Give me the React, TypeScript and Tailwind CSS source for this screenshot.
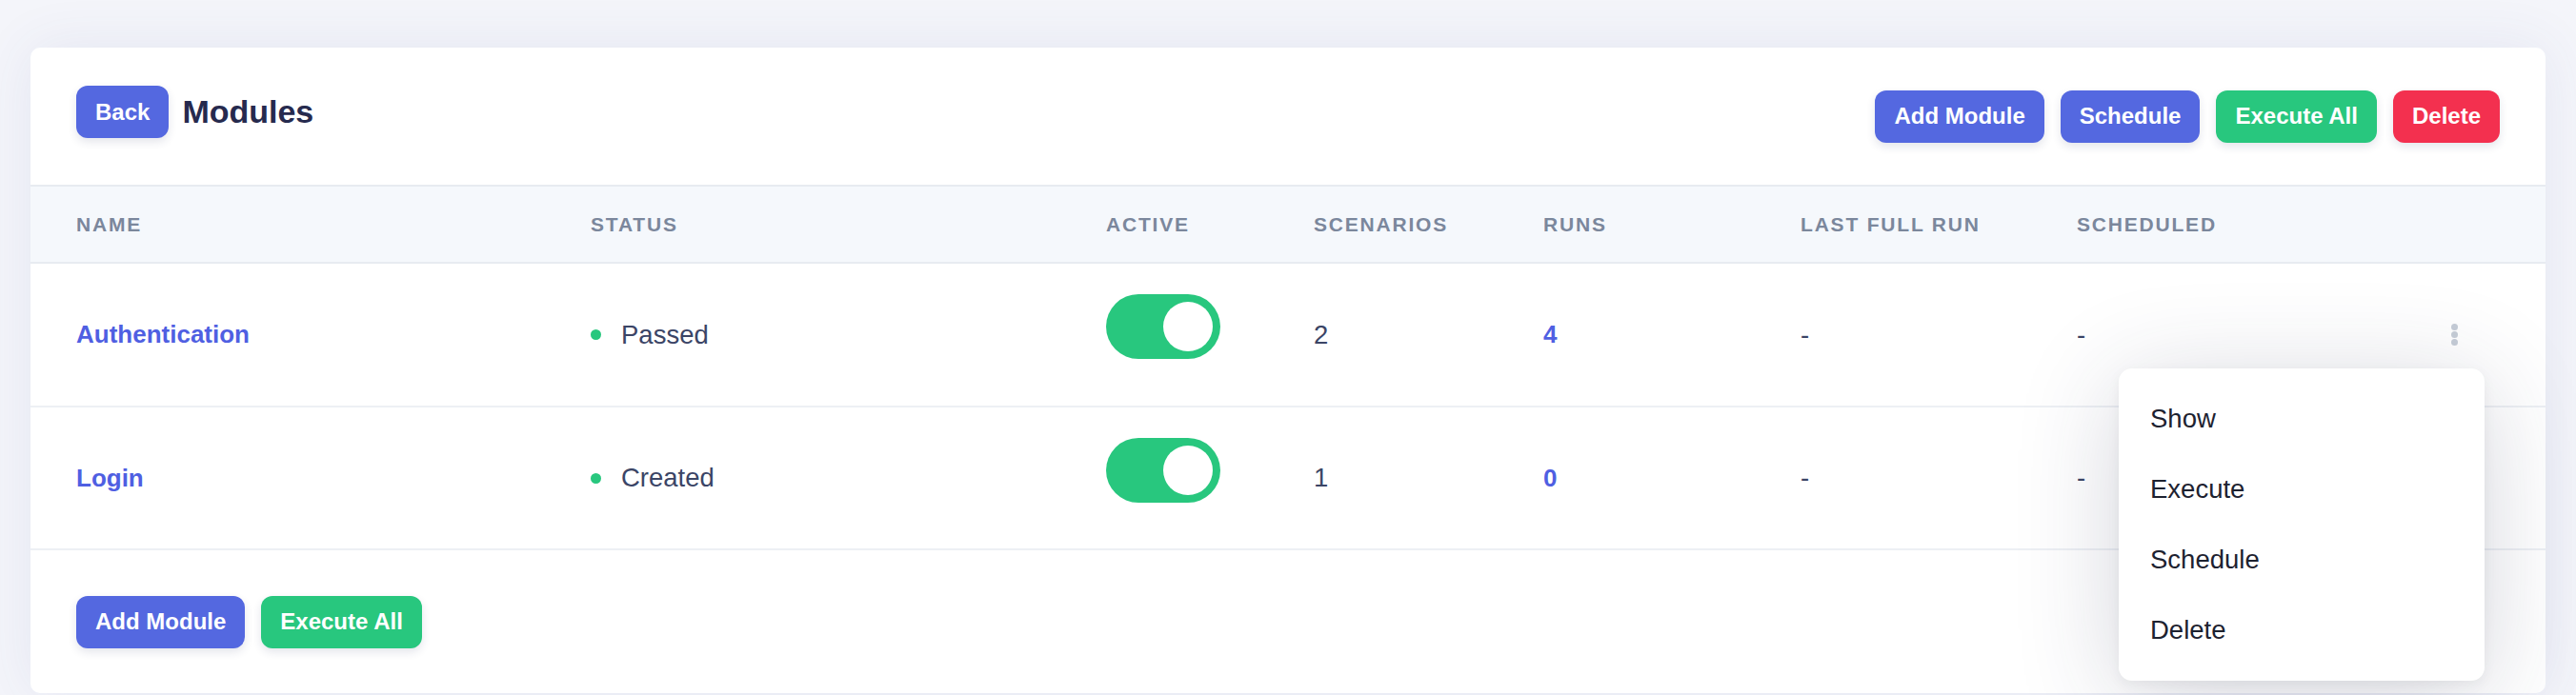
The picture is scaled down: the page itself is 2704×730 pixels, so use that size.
import React from 'react'

type Row = {
  name: string
  status: string
  scenarios: number
  runs: number
}

const rows: Row[] = [
  { name: 'Authentication', status: 'Passed', scenarios: 2, runs: 4 },
  { name: 'Login', status: 'Created', scenarios: 1, runs: 0 },
]

const cols = 'grid grid-cols-[540px_541px_218px_241px_270px_290px_1fr_51px] px-12 items-center'

function Btn({ color, children }: { color: 'blue' | 'green' | 'red'; children: React.ReactNode }) {
  const bg = color === 'blue' ? 'bg-[#5468e0]' : color === 'green' ? 'bg-[#28c77e]' : 'bg-[#f3304f]'
  return (
    <button
      type="button"
      className={`${bg} h-[55px] px-5 rounded-[12px] text-white font-bold text-[24px] leading-none shadow-[0_4px_10px_rgba(30,40,90,0.12)]`}
    >
      {children}
    </button>
  )
}

function Toggle() {
  return (
    <div className="mb-[17px] w-[120px] h-[68px] rounded-full bg-[#28c77e] flex items-center justify-end pr-2">
      <div className="w-[52px] h-[52px] rounded-full bg-white" />
    </div>
  )
}

function Kebab() {
  return (
    <div className="flex flex-col gap-[1px]">
      <span className="w-[7px] h-[7px] rounded-full bg-[#c6cdd7]" />
      <span className="w-[7px] h-[7px] rounded-full bg-[#c6cdd7]" />
      <span className="w-[7px] h-[7px] rounded-full bg-[#c6cdd7]" />
    </div>
  )
}

export default function App() {
  return (
    <div className="min-h-[730px] bg-[#f4f5fa] pt-[50px] px-8 font-['Liberation_Sans',Arial,sans-serif]">
      <div className="relative bg-white rounded-[10px] shadow-[0_0_60px_rgba(70,80,160,0.09)]">
        {/* top bar */}
        <div className="h-[144px] px-12 flex items-center justify-between">
          <div className="flex items-center gap-[14px] mb-[9px]">
            <Btn color="blue">Back</Btn>
            <h1 className="text-[34px] font-bold text-[#262a4e]">Modules</h1>
          </div>
          <div className="flex items-center gap-[17px]">
            <Btn color="blue">Add Module</Btn>
            <Btn color="blue">Schedule</Btn>
            <Btn color="green">Execute All</Btn>
            <Btn color="red">Delete</Btn>
          </div>
        </div>

        {/* table head */}
        <div className={`${cols} h-[83px] border-y-2 border-[#e7ebf1] bg-[#f5f8fc] text-[21px] font-bold tracking-[1.8px] text-[#7b879c]`}>
          <div>NAME</div>
          <div>STATUS</div>
          <div>ACTIVE</div>
          <div>SCENARIOS</div>
          <div>RUNS</div>
          <div>LAST FULL RUN</div>
          <div>SCHEDULED</div>
          <div />
        </div>

        {/* rows */}
        {rows.map((r, i) => (
          <div
            key={r.name}
            className={`${cols} ${i === 0 ? 'h-[151px]' : 'h-[150px]'} border-b-2 border-[#edf0f4] text-[27.5px] text-[#3b4566]`}
          >
            <div className="text-[26px] font-bold text-[#4f5fe2]">{r.name}</div>
            <div className="flex items-center gap-[21px]">
              <span className="w-[11px] h-[11px] rounded-full bg-[#28c77e]" />
              <span>{r.status}</span>
            </div>
            <div>
              <Toggle />
            </div>
            <div>{r.scenarios}</div>
            <div className="text-[26px] font-bold text-[#4f5fe2]">{r.runs}</div>
            <div>-</div>
            <div>-</div>
            <div className="flex justify-start">{i === 0 && <Kebab />}</div>
          </div>
        ))}

        {/* bottom actions */}
        <div className="h-[150px] px-12 flex items-center gap-[17px]">
          <Btn color="blue">Add Module</Btn>
          <Btn color="green">Execute All</Btn>
        </div>

        {/* open dropdown */}
        <div className="absolute top-[337px] right-[64px] w-[384px] py-4 bg-white rounded-[14px] shadow-[0_16px_110px_rgba(40,45,80,0.2),0_4px_14px_rgba(0,0,0,0.05)]">
          {['Show', 'Execute', 'Schedule', 'Delete'].map((item) => (
            <div key={item} className="h-[74px] px-[33px] flex items-center text-[27.5px] text-[#1d2230]">
              {item}
            </div>
          ))}
        </div>
      </div>
    </div>
  )
}
